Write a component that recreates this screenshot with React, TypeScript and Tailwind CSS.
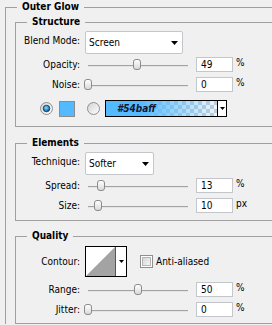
import type { ReactNode } from 'react';

const ui = "font-['DejaVu_Sans_Condensed','DejaVu_Sans',sans-serif] text-[10px] text-black";

function Group({ title, className = '', children }: { title: string; className?: string; children: ReactNode }) {
  return (
    <fieldset className={`min-w-0 border-b border-l border-t border-[#a0a0a0] ${className}`}>
      <legend className="ml-[11px] px-[5px] font-bold leading-[14px]">{title}</legend>
      {children}
    </fieldset>
  );
}

function Arrow({ w = 7, h = 4 }: { w?: number; h?: number }) {
  return (
    <svg width={w} height={h} viewBox={`0 0 ${w} ${h}`}>
      <path d={`M0 0H${w}L${w / 2} ${h}Z`} fill="#000" />
    </svg>
  );
}

function Select({ value, className = '' }: { value: string; className?: string }) {
  return (
    <div className={`ml-[5px] flex h-[23px] items-center justify-between rounded-[2px] border border-[#c3c6ca] bg-white pl-[3px] pr-[4px] ${className}`}>
      <span className="leading-[12px]">{value}</span>
      <Arrow />
    </div>
  );
}

function Slider({ pos }: { pos: number }) {
  return (
    <div className="relative ml-[4px] h-full w-[108px]">
      <div className="absolute left-[4px] right-[4px] top-[8px] h-[2px] border-t border-[#a3a3a3] bg-[#e4e4e4]" />
      <div
        className="absolute top-[2px] h-[11px] w-[8px] rounded-[3px] border border-[#8b8b8b] bg-linear-to-b from-white to-[#d9d9d9]"
        style={{ left: pos }}
      />
    </div>
  );
}

function SliderRow({ label, value, pos, unit = '%', className = '' }: { label: string; value: string; pos: number; unit?: string; className?: string }) {
  return (
    <div className={`flex h-[15px] items-center ${className}`}>
      <span className="w-[64px] text-right leading-[12px]">{label}</span>
      <Slider pos={pos} />
      <div className="ml-[4px] flex h-[15px] w-[37px] items-center border border-[#c3c7cc] bg-white pl-[4px] leading-[12px]">{value}</div>
      <span className="mb-[3px] ml-[3px] leading-[12px]">{unit}</span>
    </div>
  );
}

function Radio({ checked = false, className = '' }: { checked?: boolean; className?: string }) {
  return (
    <svg width="13" height="13" viewBox="0 0 13 13" className={className}>
      <defs>
        <linearGradient id={checked ? 'rbOn' : 'rbOff'} x1="0" y1="0" x2="1" y2="1">
          <stop offset="0" stopColor="#d2d2d2" />
          <stop offset="1" stopColor="#ffffff" />
        </linearGradient>
        <radialGradient id="dot" cx="45%" cy="40%" r="60%">
          <stop offset="0" stopColor="#8fe0ff" />
          <stop offset="0.6" stopColor="#2a8cc4" />
          <stop offset="1" stopColor="#114a78" />
        </radialGradient>
      </defs>
      <circle cx="6.5" cy="6.5" r="6" fill={`url(#${checked ? 'rbOn' : 'rbOff'})`} stroke="#8e8f8f" />
      {checked && <circle cx="6.5" cy="6.5" r="3.3" fill="url(#dot)" stroke="#173a58" strokeWidth="0.8" />}
    </svg>
  );
}

function Checkbox() {
  return (
    <div className="flex h-[13px] w-[13px] items-center justify-center border border-[#8f8f8f] bg-white">
      <div className="h-[9px] w-[9px] border border-[#b5b5b5] bg-linear-to-br from-[#d6d6d6] to-[#f6f6f6]" />
    </div>
  );
}

export default function App() {
  return (
    <div className={`h-[325px] w-[272px] overflow-hidden bg-[#f0f0f0] ${ui}`}>
      <fieldset className="ml-[5px] min-w-0 border-l border-t border-[#a0a0a0]">
        <legend className="ml-[11px] px-[5px] font-bold leading-[14px]">Outer Glow</legend>

        <Group title="Structure" className="ml-[9px] mt-[1px] pb-[9px]">
          <div className="mt-[2px] flex h-[23px] items-center">
            <span className="mb-[4px] w-[64px] text-right leading-[12px]">Blend Mode:</span>
            <Select value="Screen" className="w-[98px]" />
          </div>
          <SliderRow label="Opacity:" value="49" pos={49} className="mt-[3px]" />
          <SliderRow label="Noise:" value="0" pos={0} className="mt-[5px]" />
          <div className="mt-[8px] flex h-[17px] items-center pl-[24px]">
            <Radio checked />
            <div className="ml-[6px] h-[16px] w-[16px] border border-[#8c8c8c] bg-[#54baff]" />
            <Radio className="ml-[12px]" />
            <div className="ml-[5px] flex h-[17px] w-[122px] border border-black">
              <div className="flex flex-1 items-center bg-[image:linear-gradient(90deg,#54baff_0%,#54baff_30%,rgba(84,186,255,0.12)_100%),repeating-conic-gradient(#cfcfcf_0%_25%,#ffffff_0%_50%)] bg-[length:100%_100%,8px_8px] pl-[11px] font-bold italic leading-[12px] text-[#151530]">
                #54baff
              </div>
              <div className="flex w-[9px] items-center justify-center border-l border-black bg-white">
                <Arrow w={5} h={3} />
              </div>
            </div>
          </div>
        </Group>

        <Group title="Elements" className="ml-[9px] mt-[9px] pb-[7px]">
          <div className="mt-[2px] flex h-[23px] items-center">
            <span className="mb-[3px] w-[64px] text-right leading-[12px]">Technique:</span>
            <Select value="Softer" className="w-[69px]" />
          </div>
          <SliderRow label="Spread:" value="13" pos={13} className="mt-[3px]" />
          <SliderRow label="Size:" value="10" pos={10} unit="px" className="mt-[5px]" />
        </Group>

        <Group title="Quality" className="ml-[9px] mt-[8px] pb-[6px]">
          <div className="mt-[3px] flex h-[31px] items-center">
            <span className="w-[64px] text-right leading-[12px]">Contour:</span>
            <div className="ml-[5px] flex h-[31px] w-[42px] border border-black bg-white">
              <svg width="29" height="29" viewBox="0 0 29 29">
                <path d="M0 29L29 0V29Z" fill="#a3a3a3" />
              </svg>
              <div className="flex flex-1 items-center justify-center border-l border-[#555]">
                <Arrow w={5} h={3} />
              </div>
            </div>
            <div className="ml-[13px]">
              <Checkbox />
            </div>
            <span className="ml-[3px] leading-[12px]">Anti-aliased</span>
          </div>
          <SliderRow label="Range:" value="50" pos={50} className="mt-[5px]" />
          <SliderRow label="Jitter:" value="0" pos={0} className="mt-[5px]" />
        </Group>
      </fieldset>
    </div>
  );
}
